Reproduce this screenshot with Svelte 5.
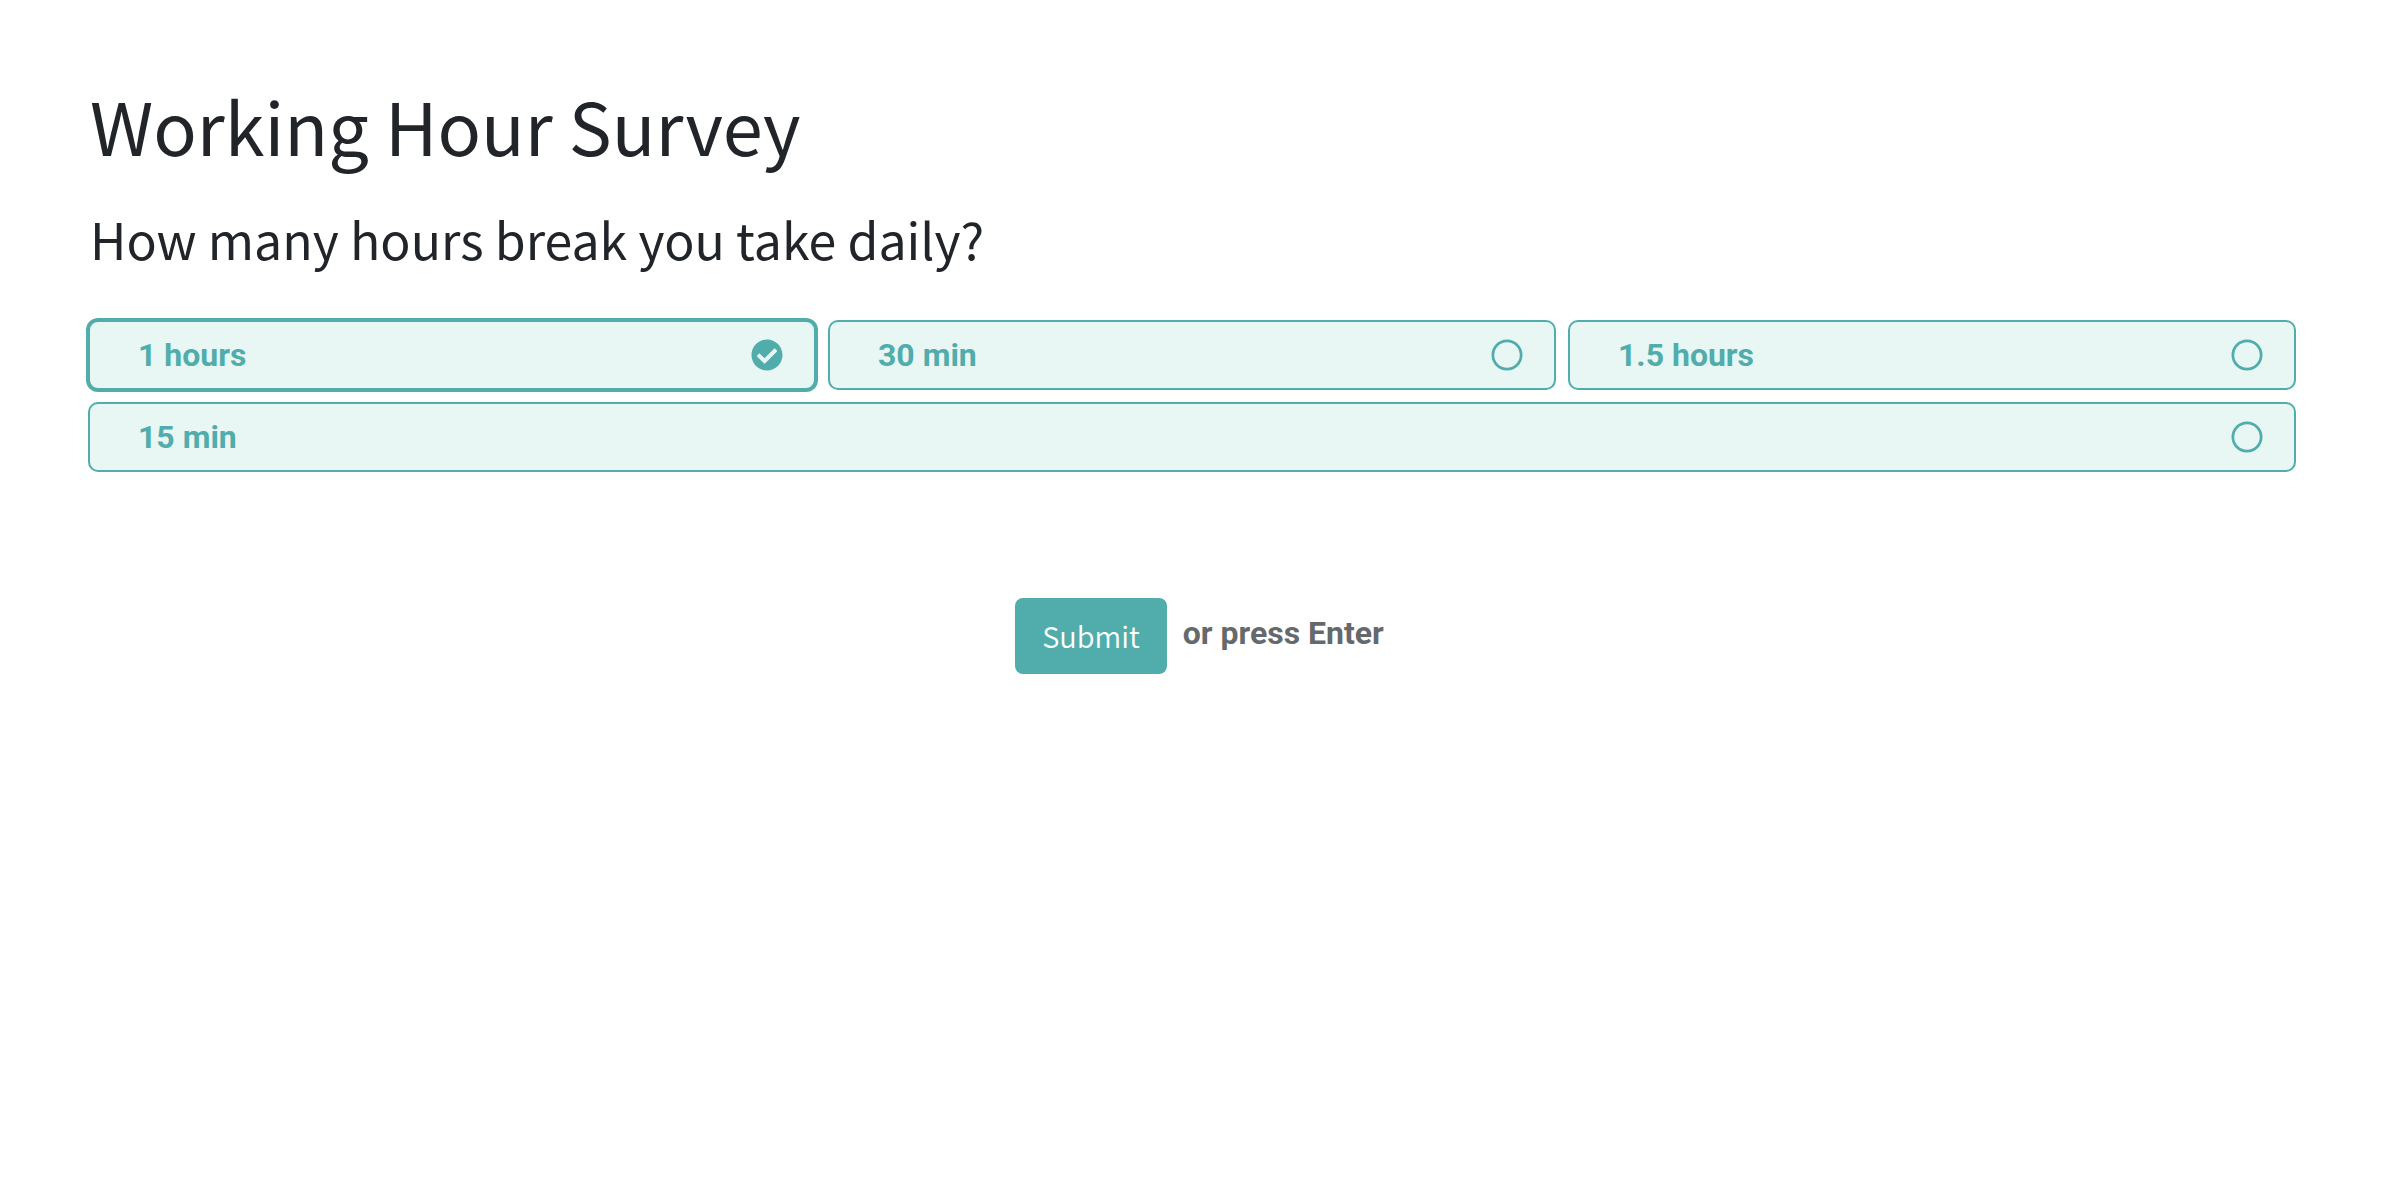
<script>
  const options = ["1 hours", "30 min", "1.5 hours", "15 min"];

  let selected = $state("1 hours");

  function submit(e) {
    e.preventDefault();
  }
</script>

<form class="survey" onsubmit={submit}>
  <h1>Working Hour Survey</h1>

  <fieldset>
    <legend>How many hours break you take daily?</legend>
    <div class="options">
      {#each options as option}
        <label class="option" class:selected={selected === option}>
          <input type="radio" name="break" value={option} bind:group={selected} />
          <span>{option}</span>
          <svg viewBox="0 0 512 512" aria-hidden="true">
            {#if selected === option}
              <path d="M504 256c0 137-111 248-248 248S8 393 8 256 119 8 256 8s248 111 248 248zM227.3 387.3l184-184c6.3-6.2 6.3-16.4 0-22.6l-22.6-22.6c-6.3-6.3-16.4-6.3-22.6 0L216 308.1l-70.1-70c-6.2-6.3-16.4-6.3-22.6 0l-22.6 22.6c-6.3 6.2-6.3 16.4 0 22.6l104 104c6.2 6.3 16.4 6.3 22.6 0z" />
            {:else}
              <circle cx="256" cy="256" r="226" fill="none" stroke="currentColor" stroke-width="44" />
            {/if}
          </svg>
        </label>
      {/each}
    </div>
  </fieldset>

  <div class="actions">
    <button type="submit">Submit</button>
    <span class="hint">or press Enter</span>
  </div>
</form>

<style>
  :global(body) {
    margin: 0;
    background: #fff;
  }

  .survey {
    padding-top: 77px;
    color: #212529;
    font-family: "Noto Sans CJK SC", "Open Sans", sans-serif;
  }

  h1 {
    margin: 0 90px 21px;
    font-size: 72px;
    font-weight: 400;
    line-height: 96px;
  }

  fieldset {
    margin: 0;
    padding: 0 103px 0 88px;
    border: 0;
    min-width: 0;
  }

  legend {
    padding: 0 2px;
    margin-bottom: 38px;
    font-size: 50px;
    line-height: 88px;
  }

  .options {
    display: grid;
    grid-template-columns: repeat(3, 1fr);
    gap: 12px;
  }

  .option {
    display: flex;
    align-items: center;
    justify-content: space-between;
    box-sizing: border-box;
    height: 70px;
    padding: 0 31px 0 48px;
    border: 2px solid #50adac;
    border-radius: 10px;
    background: #e8f7f4;
    color: #50adac;
    font: 700 32px/40px Roboto, sans-serif;
    cursor: pointer;
  }

  /* an option alone on the last row takes the whole row */
  .option:last-child:nth-child(3n + 1) {
    grid-column: 1 / -1;
  }

  .selected {
    box-shadow: 0 0 0 2px #50adac;
  }

  input {
    appearance: none;
    position: absolute;
    margin: 0;
  }

  svg {
    width: 32px;
    height: 32px;
    fill: currentColor;
  }

  .actions {
    display: flex;
    justify-content: center;
    gap: 16px;
    margin-top: 126px;
  }

  button {
    padding: 15px 27px 17px;
    border: 0;
    border-radius: 8px;
    background: #50adac;
    color: #fff;
    font: 350 29px/44px "Noto Sans CJK SC", "Open Sans", sans-serif;
    cursor: pointer;
  }

  .hint {
    color: #65696c;
    font: 700 32px/70px Roboto, sans-serif;
  }
</style>
